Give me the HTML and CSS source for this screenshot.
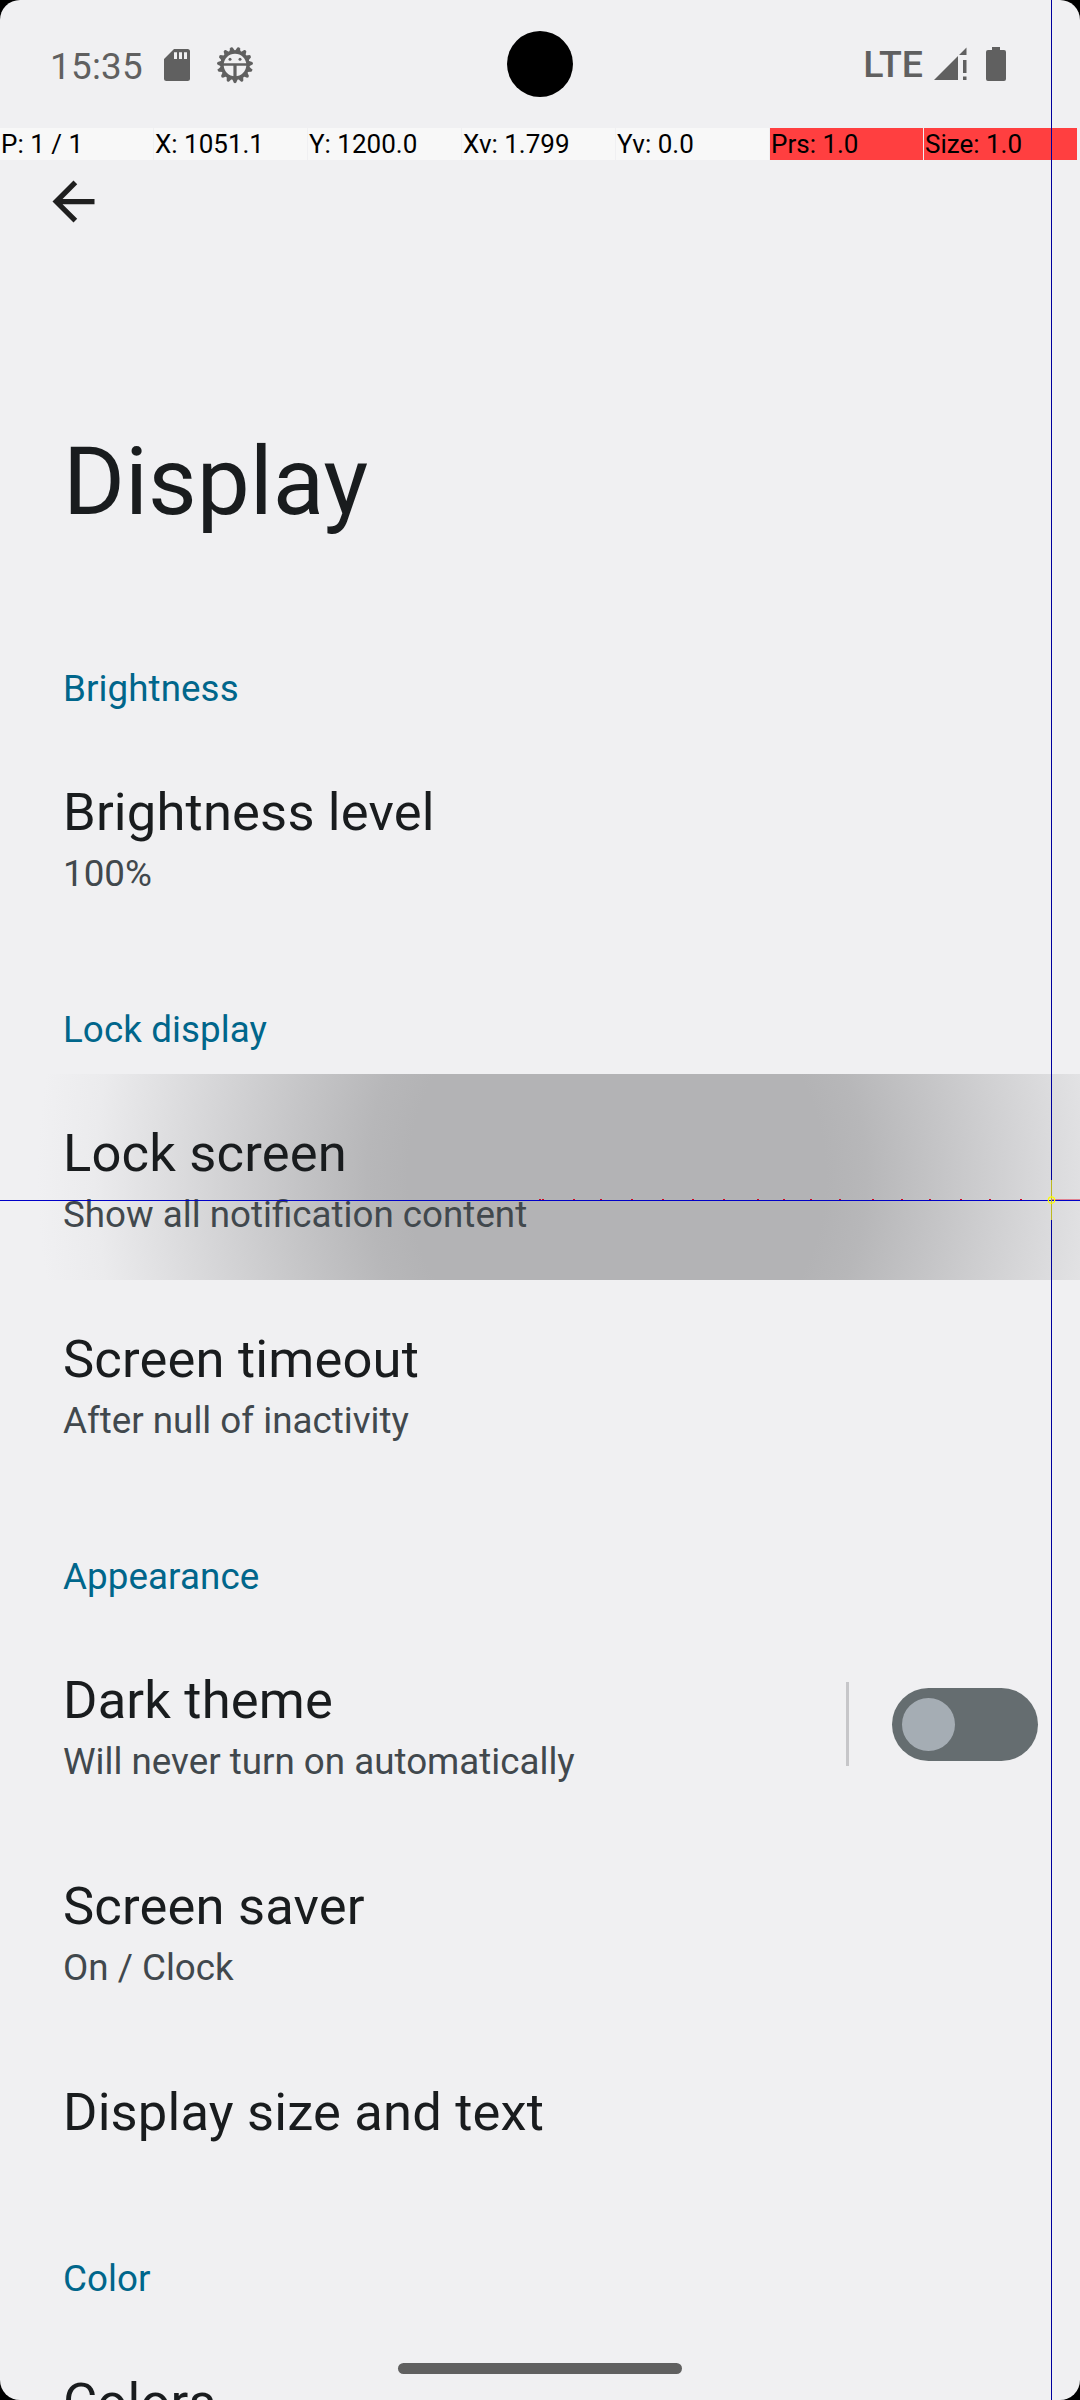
FILE: index.html
```html
<!DOCTYPE html>
<html lang="en">
<head>
<meta charset="utf-8">
<title>Display</title>
<link rel="stylesheet" href="styles.css">
</head>
<body>
<div class="screen">
  <header class="status">
    <span class="clock">15:35</span>
    <svg class="sd" viewBox="0 0 26 32"><path fill="#606060" fill-rule="evenodd" d="M10 0H23.500Q26 0 26 2.500V29.500Q26 32 23.500 32H2.500Q0 32 0 29.500V10ZM10 3.300V10H13V3.300ZM15 3.300V10H18V3.300ZM20 3.300V10H23V3.300Z"/></svg>
    <svg class="gear" viewBox="-19 -19 38 38">
      <defs><path id="tooth" fill="#606060" d="M-3.200 13L-1.300 17.500Q0 18.800 1.300 17.500L3.200 13Z"/></defs>
      <circle r="13" fill="none" stroke="#606060" stroke-width="3.400"/>
      <use href="#tooth"/><use href="#tooth" transform="rotate(24)"/><use href="#tooth" transform="rotate(48)"/><use href="#tooth" transform="rotate(72)"/><use href="#tooth" transform="rotate(96)"/><use href="#tooth" transform="rotate(120)"/><use href="#tooth" transform="rotate(144)"/><use href="#tooth" transform="rotate(168)"/><use href="#tooth" transform="rotate(192)"/><use href="#tooth" transform="rotate(216)"/><use href="#tooth" transform="rotate(240)"/><use href="#tooth" transform="rotate(264)"/><use href="#tooth" transform="rotate(288)"/><use href="#tooth" transform="rotate(312)"/><use href="#tooth" transform="rotate(336)"/>
      <path d="M-12-.5H12" stroke="#606060" stroke-width="2.600"/>
      <path d="M0 0V13" stroke="#606060" stroke-width="3.200"/>
      <circle cx="-5" cy="-5.800" r="1.500" fill="#606060"/><circle cx="5" cy="-5.800" r="1.500" fill="#606060"/>
    </svg>
    <span class="lte">LTE</span>
    <svg class="signal" viewBox="0 0 33 33"><path fill="#606060" d="M0 33L24 9V33ZM25 8L32.500 .5V8ZM29 13H32.500V26H29ZM29 29.500H32.500V33H29Z"/></svg>
    <svg class="battery" viewBox="0 0 20 34"><path fill="#606060" d="M6 0H14V3H18Q20 3 20 5V32Q20 34 18 34H2Q0 34 0 32V5Q0 3 2 3H6Z"/></svg>
    <div class="camera"></div>
  </header>
  <div class="pointer-bar">
    <span>P: 1 / 1</span><span>X: 1051.1</span><span>Y: 1200.0</span><span>Xv: 1.799</span><span>Yv: 0.0</span><span class="hot">Prs: 1.0</span><span class="hot">Size: 1.0</span>
  </div>
  <nav class="toolbar">
    <svg class="back" viewBox="0 0 24 24"><path fill="#1f1f1f" d="M20 11H7.830l5.590-5.590L12 4l-8 8 8 8 1.410-1.410L7.830 13H20v-2z"/></svg>
  </nav>
  <h1>Display</h1>
  <main>
    <h2>Brightness</h2>
    <div class="row"><div class="name">Brightness level</div><div class="summary">100%</div></div>
    <h2>Lock display</h2>
    <div class="row pressed"><div class="name">Lock screen</div><div class="summary">Show all notification content</div></div>
    <div class="row"><div class="name">Screen timeout</div><div class="summary">After null of inactivity</div></div>
    <h2>Appearance</h2>
    <div class="row split">
      <div class="text"><div class="name">Dark theme</div><div class="summary">Will never turn on automatically</div></div>
      <div class="divider"></div>
      <div class="toggle"><div class="thumb"></div></div>
    </div>
    <div class="row"><div class="name">Screen saver</div><div class="summary">On / Clock</div></div>
    <div class="row single"><div class="name">Display size and text</div></div>
    <h2>Color</h2>
    <div class="row"><div class="name">Colors</div></div>
  </main>
  <div class="home-handle"></div>
  <svg class="crosshair" viewBox="0 0 1080 2400" shape-rendering="crispEdges">
    <path fill="#d00020" d="M539 1199h2v1h-2zM542 1199h2v1h-2zM573 1199h2v1h-2zM600 1199h2v1h-2zM631 1199h2v1h-2zM662 1199h2v1h-2zM692 1199h2v1h-2zM723 1199h2v1h-2zM757 1199h2v1h-2zM783 1199h2v1h-2zM810 1199h2v1h-2zM839 1199h2v1h-2zM872 1199h2v1h-2zM901 1199h2v1h-2zM929 1199h2v1h-2zM960 1199h2v1h-2zM989 1199h2v1h-2zM1020 1199h2v1h-2z"/>
    <path fill="#e08090" d="M1052 1199h28v1h-28z"/>
    <path fill="#0000c8" d="M0 1200h1080v1H0z"/>
    <path fill="#00009c" d="M1051 0h1v2400h-1z"/>
    <path fill="#bdb91c" d="M1051 1180h1v40h-1z"/>
    <circle cx="1051.500" cy="1200" r="3.200" fill="none" stroke="#ffff00" stroke-width="1.200" shape-rendering="auto"/>
  </svg>
</div>
</body>
</html>
```
FILE: styles.css
```css
* { box-sizing: border-box; }
body { margin: 0; background: #000; font-family: Roboto, sans-serif; }
.screen {
  position: relative;
  display: flex;
  flex-direction: column;
  height: 2400px;
  overflow: hidden;
  border-radius: 20px;
  background: #f0f0f2;
  color: #191c1e;
}
.status {
  position: relative;
  display: flex;
  align-items: flex-start;
  flex: none;
  height: 128px;
  padding: 0 74px 0 50px;
  color: #606060;
}
.clock, .lte { font-size: 36.75px; line-height: 44px; margin-top: 45px; }
.clock { width: 114px; letter-spacing: .3px; }
.sd { width: 26px; height: 32px; margin-top: 49px; }
.gear { width: 38px; height: 38px; margin: 46px 0 0 26px; }
.lte { font-size: 37.500px; font-weight: 500; margin: 42px 0 0 auto; }
.signal { width: 33px; height: 33px; margin: 47px 0 0 11px; }
.battery { width: 20px; height: 34px; margin: 47px 0 0 19px; }
.camera {
  position: absolute;
  left: 507px;
  top: 31px;
  width: 66px;
  height: 66px;
  border-radius: 50%;
  background: #000;
}
.pointer-bar { display: flex; gap: 1px; flex: none; height: 32px; }
.pointer-bar span {
  width: 153px;
  padding-left: 1px;
  background: #f8f8f8;
  color: #000;
  font-size: 26px;
  line-height: 32px;
}
.pointer-bar .hot { background: #ff3f40; }
.toolbar { flex: none; height: 240px; padding: 10px 42px; }
.back { display: block; width: 63px; height: 63px; }
h1 { flex: none; height: 198px; margin: 0; padding-left: 63px; font-size: 94.5px; font-weight: 400; line-height: 164px; }
h2 { height: 135px; margin: 0; padding: 69px 63px 0; font-size: 36.75px; font-weight: 400; line-height: 44px; letter-spacing: .08px; color: #00668b; }
.row { height: 206px; padding: 48px 63px 0; }
.name { font-size: 52.5px; line-height: 62px; letter-spacing: .18px; }
.summary { margin-top: 9px; font-size: 36.75px; line-height: 44px; color: #41484d; }
.pressed { background: radial-gradient(circle 580px at 617px 103px, #b3b3b5 0, #b3b3b5 36%, #b7b7b9 43%, #c5c5c7 56%, #dfdfe1 79%, #ebebed 90%, #f0f0f2 100%); }
.split { display: flex; padding-right: 42px; }
.text { flex: 1; }
.divider { width: 3px; height: 84px; margin-top: 13px; background: #c6c6c9; }
.toggle { width: 146px; height: 73px; margin: 19px 0 0 43px; padding: 10px; border-radius: 37px; background: #656d70; }
.thumb { width: 53px; height: 53px; border-radius: 50%; background: #a5adb4; }
.single { height: 155px; }
.home-handle {
  position: absolute;
  left: 398px;
  top: 2363px;
  width: 284px;
  height: 11px;
  border-radius: 6px;
  background: #606060;
}
.crosshair { position: absolute; inset: 0; width: 1080px; height: 2400px; }
```
